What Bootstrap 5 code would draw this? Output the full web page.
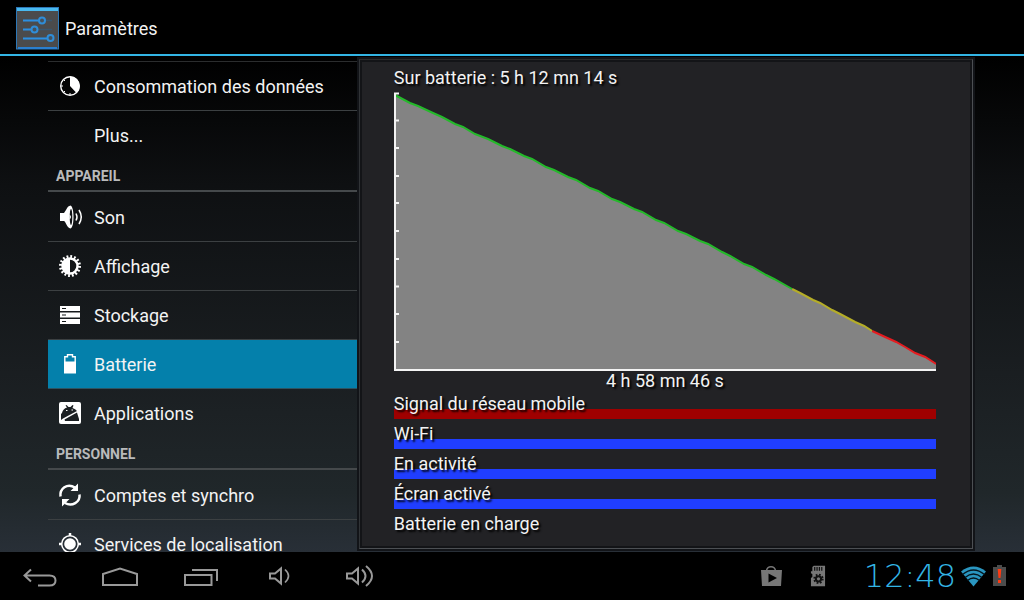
<!DOCTYPE html>
<html lang="fr">
<head>
<meta charset="utf-8">
<meta name="viewport" content="width=device-width, initial-scale=1">
<title>Paramètres</title>
<link href="https://cdn.jsdelivr.net/npm/bootstrap@5.3.0/dist/css/bootstrap.min.css" rel="stylesheet">
<style>
  body {
    font-family: Roboto, "Noto Sans", sans-serif;
    font-size: 18px;
    line-height: 24px;
    color: #f3f3f3;
    background: #000;
  }
  .app-bar { height: 56px; gap: 6px; padding-top: 2px; border-bottom: 2px solid #33b5e5; }
  .app-title { font-size: 18px; line-height: 24px; font-weight: 400; padding-top: 2px; }
  .content {
    min-height: 0;
    padding: 0 51px 0 48px;
    background: linear-gradient(#000, #0e1012 26%, #1a1e21 64%, #20272a 88%, #282f37);
  }
  .side { width: 33.6%; margin-top: 5px; border-top: 1px solid #2b2d2e; }
  .entry {
    height: 49px;
    gap: 13px;
    padding: 2px 0 0 11px;
    color: inherit;
    text-decoration: none;
    border-bottom: 1px solid transparent;
    white-space: nowrap;
  }
  .entry svg, .entry .blank { width: 22px; height: 24px; flex: none; overflow: visible; }
  .ruled { border-color: #3c4042; }
  .entry.current { background: #0480ab; border-color: #2d5361; }
  .group-title {
    height: 32px;
    margin: 0 0 1px;
    padding: 4px 8px 0;
    font-size: 14px;
    line-height: 24px;
    font-weight: 700;
    color: #b9babb;
    border-bottom: 2px solid #45494b;
  }
  .panel {
    min-width: 0;
    margin: 3px 0;
    padding: 2px 36px 0 34px;
    background: #222225;
    border: 1px solid #4c4f53;
    border-top-color: #2a2b2c;
    border-left-color: #303336;
    box-shadow: inset 0 0 0 2px #131417, 0 0 0 2px #121418;
    text-shadow: 2px 2px 2px #000;
    z-index: 1;
  }
  .since { height: 30px; padding-top: 1px; font-size: 18px; line-height: 30px; font-weight: 400; }
  .chart { width: 100%; height: 279px; }
  .duration { line-height: 20px; height: 18px; }
  .usage { height: 30px; }
  .usage > * { grid-area: 1 / 1; }
  .usage dt { font-weight: 400; line-height: 30px; z-index: 1; }
  .usage dd { height: 10px; }
  .none { background: #9f0000; }
  .on { background: #203eff; }
  .nav-bar { height: 48px; background: #000; }
  .key { width: 80px; height: 48px; }
  .key svg { stroke: #999; stroke-width: 2; fill: none; }
  .status { padding-right: 17px; }
  .clock {
    width: 98px;
    margin: 0 4px 0 32px;
    font-family: "DejaVu Sans Light", "DejaVu Sans ExtraLight", "DejaVu Sans", sans-serif;
    font-weight: 200;
    font-size: 32px;
    line-height: 48px;
    color: #33b5e5;
  }
</style>
</head>
<body class="vh-100 d-flex flex-column overflow-hidden">
<header class="app-bar d-flex align-items-center flex-shrink-0 ps-3">
  <svg width="43" height="43" viewBox="0 0 43 43" aria-hidden="true">
    <rect x=".5" y=".5" width="42" height="41.500" fill="#4b4b4c" stroke="#2c78b8"/>
    <path d="M1 1h41v3H1z" fill="#49b9ef"/>
    <path d="M2 41h39" stroke="#2a7fd0" stroke-width="2"/>
    <path d="M7 13.500h29M7 22.500h29M7 31.500h29" stroke="#39566d" stroke-width="1.500"/>
    <path d="M7 13.500h19M7 22.500h11M7 31.500h27" stroke="#2d8fe0" stroke-width="2"/>
    <g fill="#46525c" stroke="#2f8dd8" stroke-width="2"><circle cx="26" cy="13.500" r="3"/><circle cx="18.500" cy="22.500" r="3"/><circle cx="34.500" cy="31" r="3"/></g>
  </svg>
  <h1 class="app-title mb-0">Paramètres</h1>
</header>

<main class="content d-flex flex-grow-1">
  <nav class="side flex-shrink-0 overflow-hidden" aria-label="Paramètres">
    <a class="entry ruled d-flex align-items-center" href="#donnees">
      <svg viewBox="0 0 22 24" aria-hidden="true"><circle cx="11" cy="11" r="9.300" fill="none" stroke="#fff" stroke-width="1.400"/><path d="M11 1.500a9.500 9.500 0 0 1 6.500 16.500L11 11z" fill="#fff"/><path d="M2 11h2M4.500 4.500l1.500 1.500M4.500 17.500L6 16M11 20v-2" stroke="#fff"/></svg>
      Consommation des données</a>
    <a class="entry d-flex align-items-center" href="#plus"><span class="blank"></span>Plus...</a>
    <h2 class="group-title">APPAREIL</h2>
    <a class="entry ruled d-flex align-items-center" href="#son">
      <svg viewBox="0 0 22 24" aria-hidden="true"><path d="M1 7h4C7 5 8 0 11.500-.5c4 1 4 22 0 23C8 22 7 16 5 15H1z" fill="#fff"/><ellipse cx="12" cy="11" rx="1.300" ry="8" fill="#111417"/><path d="M10.500 8.500q3 2.500 0 5z" fill="#fff"/><path d="M17 7.500q2 3.500 0 7M20 4q4.500 7 0 14" fill="none" stroke="#fff" stroke-width="1.500"/></svg>
      Son</a>
    <a class="entry ruled d-flex align-items-center" href="#affichage">
      <svg viewBox="0 0 22 24" aria-hidden="true"><circle cx="11" cy="11" r="9.500" fill="none" stroke="#fff" stroke-width="3" stroke-dasharray="1.800 1.930"/><circle cx="11" cy="11" r="7.500" fill="none" stroke="#fff" stroke-width="2.400"/><path d="M11 3.500v15a7.500 7.500 0 0 1 0-15z" fill="#fff"/></svg>
      Affichage</a>
    <a class="entry ruled d-flex align-items-center" href="#stockage">
      <svg viewBox="0 0 22 24" aria-hidden="true"><path d="M1 2h20v5H1zM1 8.500h20v5H1zM1 15h20v5H1z" fill="#fff"/><path d="M3 4.500h4M3 11h4M3 17.500h4" stroke="#15191b" stroke-width="1.200"/></svg>
      Stockage</a>
    <a class="entry current d-flex align-items-center" href="#batterie" aria-current="page">
      <svg viewBox="0 0 22 24" aria-hidden="true"><path d="M5.800 19.200V3.800H8.500V1.800h5v2h2.700v15.400z" fill="none" stroke="#fff" stroke-width="1.400"/><path d="M5 8.500h12v12H5z" fill="#fff"/></svg>
      Batterie</a>
    <a class="entry d-flex align-items-center" href="#applications">
      <svg viewBox="0 0 22 24" aria-hidden="true"><rect width="22" height="22" rx="2" fill="#fff"/><path d="M3 11Q4 6.500 8 5.500L6.500 3.500l1-.5 2 2h2l2-2 1 .5-1 2.500q3 1 4.500 3L4 16.500 2 18V12z" fill="#1c2023"/><path d="M5.500 17.500L18 10.500 20 17v2H6z" fill="#1c2023"/><path d="M7 8.500h1.500M12.500 8H14" stroke="#fff"/></svg>
      Applications</a>
    <h2 class="group-title">PERSONNEL</h2>
    <a class="entry ruled d-flex align-items-center" href="#comptes">
      <svg viewBox="0 0 22 24" aria-hidden="true"><g fill="none" stroke="#fff" stroke-width="2.500"><path d="M1.500 12.500C.5 5 8-1.500 16 3.500"/><path d="M20.500 10.500C21.500 18 13 23 6 19"/></g><path d="M19-.5v7.500h-7.500zM3 22.500v-7.500h7.500z" fill="#fff"/></svg>
      Comptes et synchro</a>
    <a class="entry ruled d-flex align-items-center" href="#localisation">
      <svg viewBox="0 0 22 24" aria-hidden="true"><circle cx="11" cy="11" r="5.800" fill="#fff"/><circle cx="11" cy="11" r="8.300" fill="none" stroke="#fff" stroke-width="1.500"/><path d="M11 0v3M11 19v3M0 11h3M19 11h3" stroke="#fff" stroke-width="2.500"/></svg>
      Services de localisation</a>
  </nav>

  <section class="panel flex-grow-1" aria-labelledby="since">
    <h2 class="since mb-0" id="since">Sur batterie : 5 h 12 mn 14 s</h2>
    <svg class="chart d-block" viewBox="0 0 542 279" preserveAspectRatio="none" role="img" aria-label="Niveau de la batterie">
      <path fill="#838383" d="M1 3L16 11 24 14 39 21 48 25 61 32 69 35 81 42 94 47 108 54 116 57 130 64 138 67 152 75 160 78 174 85 182 88 196 96 204 99 218 107 226 110 240 117 248 120 262 128 270 131 284 139 292 142 306 149 314 152 328 160 336 164 350 172 358 175 372 183 380 187 398 197 406 201 419 208 426 211 438 218 446 222 461 230 470 234 478 239 491 245 502 250 511 255 521 261 531 265 542 272V278H1z"/>
      <g fill="none" stroke-width="2">
        <path stroke="#24b92a" d="M1 3L16 11 24 14 39 21 48 25 61 32 69 35 81 42 94 47 108 54 116 57 130 64 138 67 152 75 160 78 174 85 182 88 196 96 204 99 218 107 226 110 240 117 248 120 262 128 270 131 284 139 292 142 306 149 314 152 328 160 336 164 350 172 358 175 372 183 380 187 398 197"/>
        <path stroke="#b5ad27" d="M398 197L406 201 419 208 426 211 438 218 446 222 461 230 470 234 478 239"/>
        <path stroke="#e51c20" d="M478 239L491 245 502 250 511 255 521 261 531 265 542 272"/>
        <path stroke="#f4f4f4" d="M1 1V278H542M0 1.500H5M0 28.500H5M0 56H5M0 84H5M0 111H5M0 139H5M0 167H5M0 194.500H5M0 222H5M0 250H5"/>
      </g>
    </svg>
    <div class="duration text-center">4 h 58 mn 46 s</div>
    <dl class="mb-0">
      <div class="usage d-grid"><dt>Signal du réseau mobile</dt><dd class="none align-self-end m-0"></dd></div>
      <div class="usage d-grid"><dt>Wi-Fi</dt><dd class="on align-self-end m-0"></dd></div>
      <div class="usage d-grid"><dt>En activité</dt><dd class="on align-self-end m-0"></dd></div>
      <div class="usage d-grid"><dt>Écran activé</dt><dd class="on align-self-end m-0"></dd></div>
      <div class="usage d-grid"><dt>Batterie en charge</dt><dd class="align-self-end m-0"></dd></div>
    </dl>
  </section>
</main>

<footer class="nav-bar d-flex justify-content-between flex-shrink-0">
  <div class="d-flex">
    <button class="key btn p-0 border-0 rounded-0" type="button" aria-label="Retour"><svg class="d-block" width="80" height="48"><path d="M31 17.500l-6.500 6 6.500 6M25 23.500h24.500q6 0 6 5t-6 5H38"/></svg></button>
    <button class="key btn p-0 border-0 rounded-0" type="button" aria-label="Accueil"><svg class="d-block" width="80" height="48"><path d="M23 33V22L40 16.500 57 22V33z"/></svg></button>
    <button class="key btn p-0 border-0 rounded-0" type="button" aria-label="Applications récentes"><svg class="d-block" width="80" height="48"><path d="M25 23h26.500v10H25zM32 18h25v11"/></svg></button>
    <button class="key btn p-0 border-0 rounded-0" type="button" aria-label="Baisser le volume"><svg class="d-block" width="80" height="48"><path d="M30 21.500h5l6-5v15l-6-5h-5z"/><path d="M45 17.500q7 6.500 0 13" stroke-width="1.700"/></svg></button>
    <button class="key btn p-0 border-0 rounded-0" type="button" aria-label="Augmenter le volume"><svg class="d-block" width="80" height="48"><path d="M27 21.500h5l6-5v15l-6-5h-5z"/><path d="M42 17.500q7 6.500 0 13M46 14q12 10 0 20"/></svg></button>
  </div>
  <div class="status d-flex align-items-center">
    <svg width="21" height="22" viewBox="0 0 21 22" aria-hidden="true"><path d="M5.500 6.500C5.500 0 14.500 0 14.500 6.500" fill="none" stroke="#777" stroke-width="1.500"/><path d="M0 5h21l-1 16H1z" fill="#777"/><path d="M7.500 8.500v9l8.500-4.500z" fill="#000"/></svg>
    <svg class="ms-4 ps-1" width="20" height="22" viewBox="-1 0 17 22" aria-hidden="true"><path d="M3 0h12v22H0v-9l1.500-1V9L0 8V6h1.500V1.500z" fill="#777"/><path d="M4 1.500v4M6.500 1.500v4M9 1.500v4M11.500 1.500v4" stroke="#111" stroke-width="1.300"/><circle cx="8" cy="14" r="2.800" fill="none" stroke="#111" stroke-width="2.200"/><circle cx="8" cy="14" r="4.500" fill="none" stroke="#111" stroke-width="2" stroke-dasharray="1.800 1.740"/></svg>
    <time class="clock text-nowrap text-end" datetime="12:48">12:48</time>
    <svg width="27" height="21" viewBox="0 0 27 21" aria-hidden="true"><path d="M1 5.500Q13.500-4.500 26 5.500L13.500 20.500z" fill="#2a96c0"/><path d="M2.500 8.500Q13.500-.5 24.500 8.500M5 11.500Q13.500 4.500 22 11.500M7.500 14.500Q13.500 9.500 19.500 14.500" fill="none" stroke="#04161e" stroke-width="1.300"/></svg>
    <svg class="ms-1" width="16" height="22" viewBox="-2 0 14 22" aria-hidden="true"><path d="M-1 2h4V0h5v2h4v19H-1z" fill="#4c4c4c"/><path d="M3.700 4h3.600l-.8 9h-2zM4 15h3v3H4z" fill="#ff3a12"/></svg>
  </div>
</footer>
<script src="https://cdn.jsdelivr.net/npm/bootstrap@5.3.0/dist/js/bootstrap.bundle.min.js"></script>
</body>
</html>
